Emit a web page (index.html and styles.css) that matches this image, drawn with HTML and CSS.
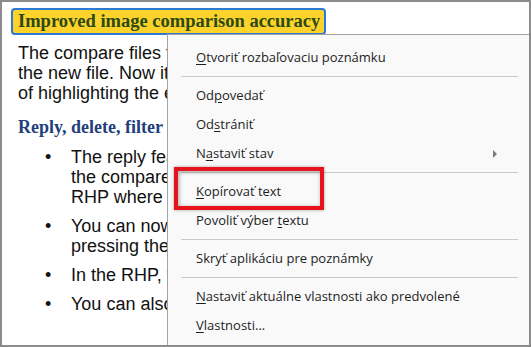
FILE: index.html
```html
<!DOCTYPE html>
<html lang="sk">
  <head>
    <meta charset="UTF-8" />
    <meta name="viewport" content="width=device-width, initial-scale=1.0" />
    <link rel="stylesheet" href="styles.css">
  </head>
  <body>
    <div class="frame">
      <div class="doc">
        <div class="title">Improved image comparison accuracy</div>
        <p class="para">The compare files feature now checks images.<br>the new file. Now it shows the differences<br>of highlighting the entire image.</p>
        <h2 class="subtitle">Reply, delete, filter comments</h2>
        <ul class="bullets">
          <li>The reply feature is now available in<br>the compare report. You can reply in<br>RHP where comments are listed.</li>
          <li>You can now delete comments by<br>pressing the delete key.</li>
          <li>In the RHP, you can filter comments.</li>
          <li>You can also sort comments.</li>
        </ul>
      </div>

      <div class="menu">
        <div class="item"><u>O</u>tvoriť rozbaľovaciu poznámku</div>
        <div class="sep"></div>
        <div class="item">Od<u>p</u>ovedať</div>
        <div class="item">Od<u>s</u>trániť</div>
        <div class="item has-sub">N<u>a</u>staviť stav <span class="arrow"></span></div>
        <div class="sep"></div>
        <div class="item"><u>K</u>opírovať text</div>
        <div class="item">Povoliť výber <u>t</u>extu</div>
        <div class="sep"></div>
        <div class="item">Skryť aplikáciu pre poznámky</div>
        <div class="sep"></div>
        <div class="item"><u>N</u>astaviť aktuálne vlastnosti ako predvolené</div>
        <div class="item"><u>V</u>lastnosti...</div>
      </div>

      <div class="callout"></div>
    </div>
  </body>
</html>
```

FILE: styles.css
```css
html, body {
  margin: 0;
  padding: 0;
  background: #ffffff;
}

.frame {
  position: relative;
  width: 531px;
  height: 347px;
  box-sizing: border-box;
  border: 2px solid #8c8c8c;
  overflow: hidden;
  background: #ffffff;
}

.doc {
  padding: 6px 9px;
}

.title {
  display: inline-block;
  box-sizing: border-box;
  width: 315px;
  height: 27px;
  padding: 0 0 0 5px;
  border: 2px solid #2f78d4;
  border-radius: 4px;
  background: #fdd22b;
  color: #2b4a14;
  font-family: "Liberation Serif", serif;
  font-weight: bold;
  font-size: 18.5px;
  line-height: 23px;
  white-space: nowrap;
}

.para {
  margin: 8px 0 0 7px;
  font-family: "Liberation Sans", sans-serif;
  font-size: 18px;
  line-height: 20px;
  color: #111111;
  white-space: nowrap;
}

.subtitle {
  margin: 14px 0 0 7px;
  font-family: "Liberation Serif", serif;
  font-weight: bold;
  font-size: 18px;
  line-height: 20px;
  color: #1f3f7c;
  white-space: nowrap;
}

.bullets {
  margin: 10px 0 0 0;
  padding: 0 0 0 60px;
  list-style: none;
  font-family: "Liberation Sans", sans-serif;
  font-size: 18px;
  line-height: 20px;
  color: #111111;
  white-space: nowrap;
}

.bullets li {
  margin-bottom: 9px;
}

.bullets li::before {
  content: "•";
  display: inline-block;
  width: 23px;
  margin-left: -26px;
  margin-right: 3px;
}

.menu {
  position: absolute;
  left: 165px;
  top: 32px;
  width: 380px;
  height: 320px;
  box-sizing: border-box;
  padding-top: 8px;
  border: 1px solid #a3a3a3;
  background: #f9f9f9;
  font-family: "Open Sans", sans-serif;
  font-size: 13px;
  color: #1e1e1e;
}

.item {
  position: relative;
  height: 29px;
  line-height: 29px;
  padding-left: 28px;
  white-space: nowrap;
}

.item u {
  text-underline-offset: 2px;
}

.arrow {
  position: absolute;
  left: 325px;
  top: 11px;
  width: 0;
  height: 0;
  border-top: 4px solid transparent;
  border-bottom: 4px solid transparent;
  border-left: 4px solid #7a7a7a;
}

.sep {
  height: 1px;
  margin: 4px 0 4px 13px;
  width: 337px;
  background: #cacaca;
}

.callout {
  position: absolute;
  left: 172px;
  top: 165px;
  width: 150px;
  height: 43px;
  box-sizing: border-box;
  border: 4px solid #e5141b;
  box-shadow: 0 0 3px rgba(0, 0, 0, 0.35), inset 1px 1px 4px rgba(0, 0, 0, 0.35);
}
```
